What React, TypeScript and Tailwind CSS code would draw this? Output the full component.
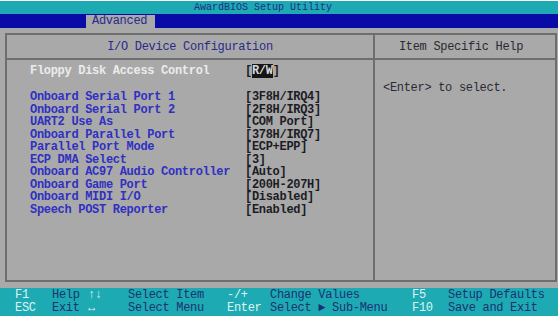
const items: Array<{ label: string; value: string }> = [
  { label: "Onboard Serial Port 1", value: "[3F8H/IRQ4]" },
  { label: "Onboard Serial Port 2", value: "[2F8H/IRQ3]" },
  { label: "UART2 Use As", value: "[COM Port]" },
  { label: "Onboard Parallel Port", value: "[378H/IRQ7]" },
  { label: "Parallel Port Mode", value: "[ECP+EPP]" },
  { label: "ECP DMA Select", value: "[3]" },
  { label: "Onboard AC97 Audio Controller", value: "[Auto]" },
  { label: "Onboard Game Port", value: "[200H-207H]" },
  { label: "Onboard MIDI I/O", value: "[Disabled]" },
  { label: "Speech POST Reporter", value: "[Enabled]" },
];

const footer: Array<[string, string, string, string, string, string, string, string]> = [
  ["F1", "Help", "↑↓", "Select Item", "-/+", "Change Values", "F5", "Setup Defaults"],
  ["ESC", "Exit", "↔", "Select Menu", "Enter", "Select ► Sub-Menu", "F10", "Save and Exit"],
];

const mono = "font-['Liberation_Mono','DejaVu_Sans_Mono',monospace]";

const App = () => {
  return (
    <div className={`w-[560px] h-[320px] overflow-hidden bg-white pt-px pr-[2px] pb-[4px] ${mono} text-[12px] tracking-[-0.3px]`}>
      <div className="flex flex-col h-full">
        {/* title bar */}
        <div className="h-[13px] bg-[#1eaab2] flex items-center pl-[194px] text-[#1c2f86] text-[10px] tracking-[0px] leading-[13px]">
          AwardBIOS Setup Utility
        </div>

        {/* menu bar */}
        <div className="h-[14px] bg-[#0a0aa6] flex items-end">
          <div className="ml-[86px] w-[69px] h-[13px] bg-[#a9a9a9] text-[#28288e] leading-[13px] pl-[6px]">
            Advanced
          </div>
        </div>

        {/* main area */}
        <div className="flex-1 min-h-0 bg-[#a9a9a9] pt-[5px] pb-[6px] pl-[5px] pr-px">
          <div className="h-full border-2 border-[#6e6e6e] flex">
            {/* left panel */}
            <div className="w-[368px] flex flex-col border-r-2 border-[#6e6e6e]">
              <div className="h-[25px] border-b-2 border-[#6e6e6e] flex items-center justify-center text-[#2a2a8a]">
                I/O Device Configuration
              </div>
              <div className="pl-[23px] pt-[5px] leading-[12.5px] font-bold">
                <div className="flex">
                  <span className="w-[215px] text-[#ececec]">Floppy Disk Access Control</span>
                  <span className="text-[#1c1c24]">
                    [<span className="bg-[#161616] text-[#d8d8d8]">R/W</span>]
                  </span>
                </div>
                <div className="h-[13.5px]" />
                {items.map((item, index) => (
                  <div key={index} className="flex">
                    <span className="w-[215px] text-[#3030c2]">{item.label}</span>
                    <span className="text-[#1c1c24]">{item.value}</span>
                  </div>
                ))}
              </div>
            </div>

            {/* right panel */}
            <div className="flex-1 flex flex-col">
              <div className="h-[25px] border-b-2 border-[#6e6e6e] flex items-center justify-center pr-[8px] text-[#2a2a34]">
                Item Specific Help
              </div>
              <div className="pl-[8px] pt-[19px] text-[#2a2a34]">&lt;Enter&gt; to select.</div>
            </div>
          </div>
        </div>

        {/* footer */}
        <div className="h-[28px] shrink-0 bg-[#1eaab2] pl-[15px] pt-[1px] leading-[13px]">
          {footer.map((row, index) => (
            <div key={index} className="grid grid-cols-[37px_36px_40px_99px_43px_142px_36px_1fr] whitespace-nowrap">
              {row.map((cell, i) => (
                <span key={i} className={i % 2 === 0 ? "text-[#dff4f4]" : "text-[#1a3274]"}>
                  {cell}
                </span>
              ))}
            </div>
          ))}
        </div>
      </div>
    </div>
  );
};

export default App;
